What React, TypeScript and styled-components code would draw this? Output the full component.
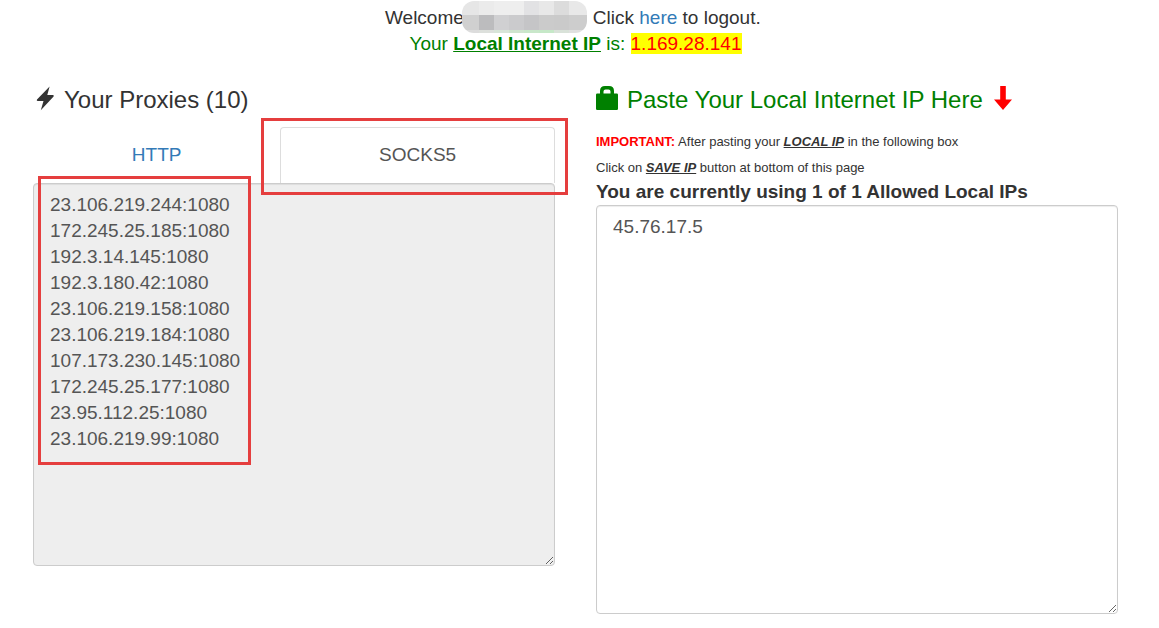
import React from "react";
import styled, { createGlobalStyle } from "styled-components";

const GlobalStyle = createGlobalStyle`
  * { box-sizing: border-box; }
  body {
    margin: 0;
    background: #fff;
    color: #333;
    font: 19px/26px "Liberation Sans", Arial, sans-serif;
  }
`;

const Page = styled.div`
  padding: 5px 41px 14px 33px;
`;

const Header = styled.header`
  text-align: center;
`;

const Line = styled.p<{ $green?: boolean }>`
  margin: 0;
  color: ${(p) => (p.$green ? "green" : "inherit")};
`;

const Link = styled.a`
  color: #337ab7;
  text-decoration: none;
`;

const Highlight = styled.span`
  background: yellow;
  color: red;
`;

const HiddenName = styled.span`
  position: relative;
  display: inline-block;
  width: 129px;
  height: 1px;
`;

const Mosaic = styled.svg`
  position: absolute;
  left: -2px;
  bottom: -9px;
`;

const Columns = styled.main`
  display: grid;
  grid-template-columns: 1fr 1fr;
  gap: 41px;
  align-items: start;
  margin-top: 30px;
`;

const Column = styled.section`
  min-width: 0;
`;

const Title = styled.h3<{ $green?: boolean }>`
  display: flex;
  align-items: center;
  gap: 7px;
  margin: 0 0 14px;
  font-size: 24px;
  font-weight: 400;
  line-height: 26px;
  color: ${(p) => (p.$green ? "green" : "inherit")};
`;

const Icon = styled.svg`
  flex: none;
  width: 24px;
  height: 26px;
  overflow: visible;
`;

const Tabs = styled.div`
  display: grid;
  grid-template-columns: 9fr 10fr;
`;

const TabSlot = styled.div`
  position: relative;
`;

const Tab = styled.button<{ $active?: boolean }>`
  display: block;
  width: 100%;
  padding: 14px 0 15px;
  border: 1px solid ${(p) => (p.$active ? "#ddd" : "transparent")};
  border-bottom: 0;
  border-radius: 4px 4px 0 0;
  background: #fff;
  color: ${(p) => (p.$active ? "#555" : "#337ab7")};
  font: inherit;
`;

const ListArea = styled.div`
  position: relative;
`;

const TextArea = styled.textarea`
  display: block;
  width: 100%;
  padding: 8px 16px 9px;
  border: 1px solid #ccc;
  border-radius: 4px;
  box-shadow: inset 0 1px 1px rgba(0, 0, 0, 0.075);
  background: #fff;
  color: #555;
  font: inherit;
  resize: both;

  &:read-only {
    background: #eee;
  }
`;

const Marker = styled.div`
  position: absolute;
  z-index: 1;
  border: 3px solid #e53e3e;
  pointer-events: none;
`;

const TabMarker = styled(Marker)`
  inset: -9px -13px -12px -19px;
`;

const ListMarker = styled(Marker)`
  top: -7px;
  left: 5px;
  width: 213px;
  height: 289px;
`;

const Notes = styled.div`
  padding-top: 2px;
  font-size: 13px;
`;

const Note = styled.p`
  margin: 0;
`;

const Important = styled.strong`
  color: red;
`;

const Term = styled.strong`
  font-style: italic;
  text-decoration: underline;
`;

const Usage = styled.label`
  display: block;
  margin-bottom: 2px;
  font-weight: 700;
  line-height: 22px;
`;

const proxies = [
  "23.106.219.244:1080",
  "172.245.25.185:1080",
  "192.3.14.145:1080",
  "192.3.180.42:1080",
  "23.106.219.158:1080",
  "23.106.219.184:1080",
  "107.173.230.145:1080",
  "172.245.25.177:1080",
  "23.95.112.25:1080",
  "23.106.219.99:1080",
];

const tiles = [
  ["#e6e6e6", "#ebebeb", "#eeeeee", "#eeeeee", "#e2e2e4", "#e8e8e8", "#dcdcdc", "#e8e8e8"],
  ["#d0d0d0", "#bcbcbe", "#d0d0d2", "#cbcbcd", "#c5c5c7", "#cbcbcb", "#cacaca", "#cdcdcd"],
  ["#dcdcdc", "#dde0dc", "#d8e5d8", "#cfe4cf", "#c9e7ca", "#c6e8c8", "#d9e2d9", "#e0e0e0"],
];

export default function App() {
  return (
    <Page>
      <GlobalStyle />
      <Header>
        <Line>
          Welcome
          <HiddenName>
            <Mosaic width="125" height="32" viewBox="0 0 125 32" aria-hidden="true">
              <clipPath id="pill">
                <rect width="125" height="32" rx="12" />
              </clipPath>
              <g clipPath="url(#pill)">
                {tiles.map((row, y) =>
                  row.map((fill, x) => (
                    <rect
                      key={`${x}-${y}`}
                      x={x ? x * 15 + 2 : 0}
                      y={[0, 14, 29][y]}
                      width={18}
                      height={[14, 15, 3][y]}
                      fill={fill}
                    />
                  ))
                )}
              </g>
            </Mosaic>
          </HiddenName>
          Click <Link href="#logout">here</Link> to logout.&nbsp;
        </Line>
        <Line $green>
          Your <strong><u>Local Internet IP</u></strong> is: <Highlight>1.169.28.141</Highlight>
        </Line>
      </Header>

      <Columns>
        <Column>
          <Title>
            <Icon viewBox="0 0 24 26" aria-hidden="true">
              <path d="M16.6-.6 4 12.600q-.8 1.200.6 1.400h5.900L7.800 23.200l12.800-13.800q.8-1.300-.7-1.400h-5.600z" fill="#333" />
            </Icon>
            Your Proxies (10)
          </Title>
          <Tabs role="tablist">
            <TabSlot>
              <Tab type="button" role="tab" aria-selected={false}>HTTP</Tab>
            </TabSlot>
            <TabSlot>
              <Tab type="button" role="tab" aria-selected $active>SOCKS5</Tab>
              <TabMarker />
            </TabSlot>
          </Tabs>
          <ListArea>
            <TextArea aria-label="SOCKS5 proxies" rows={14} readOnly value={proxies.join("\n")} />
            <ListMarker />
          </ListArea>
        </Column>

        <Column>
          <Title $green>
            <Icon viewBox="0 0 24 26" aria-hidden="true">
              <path
                fill="green"
                fillRule="evenodd"
                d="M4 6.5V4q0-5 5-5h4q5 0 5 5v2.500h2.800q1.200 0 1.200 1.200v14q0 1.300-1.200 1.300H1.200Q0 23 0 21.700v-14q0-1.200 1.200-1.200zM7.500 6.500h7V4.500q0-2-2-2h-3q-2 0-2 2z"
              />
            </Icon>
            Paste Your Local Internet IP Here
            <Icon viewBox="0 0 24 26" aria-hidden="true">
              <path d="M10.200-1h5.600v13.500H22L13 23 4 12.500h6.200z" fill="red" />
            </Icon>
          </Title>
          <Notes>
            <Note>
              <Important>IMPORTANT:</Important> After pasting your <Term>LOCAL IP</Term> in the following box
            </Note>
            <Note>
              Click on <Term>SAVE IP</Term> button at bottom of this page
            </Note>
          </Notes>
          <Usage htmlFor="local-ips">You are currently using 1 of 1 Allowed Local IPs</Usage>
          <TextArea id="local-ips" rows={15} defaultValue="45.76.17.5" />
        </Column>
      </Columns>
    </Page>
  );
}
